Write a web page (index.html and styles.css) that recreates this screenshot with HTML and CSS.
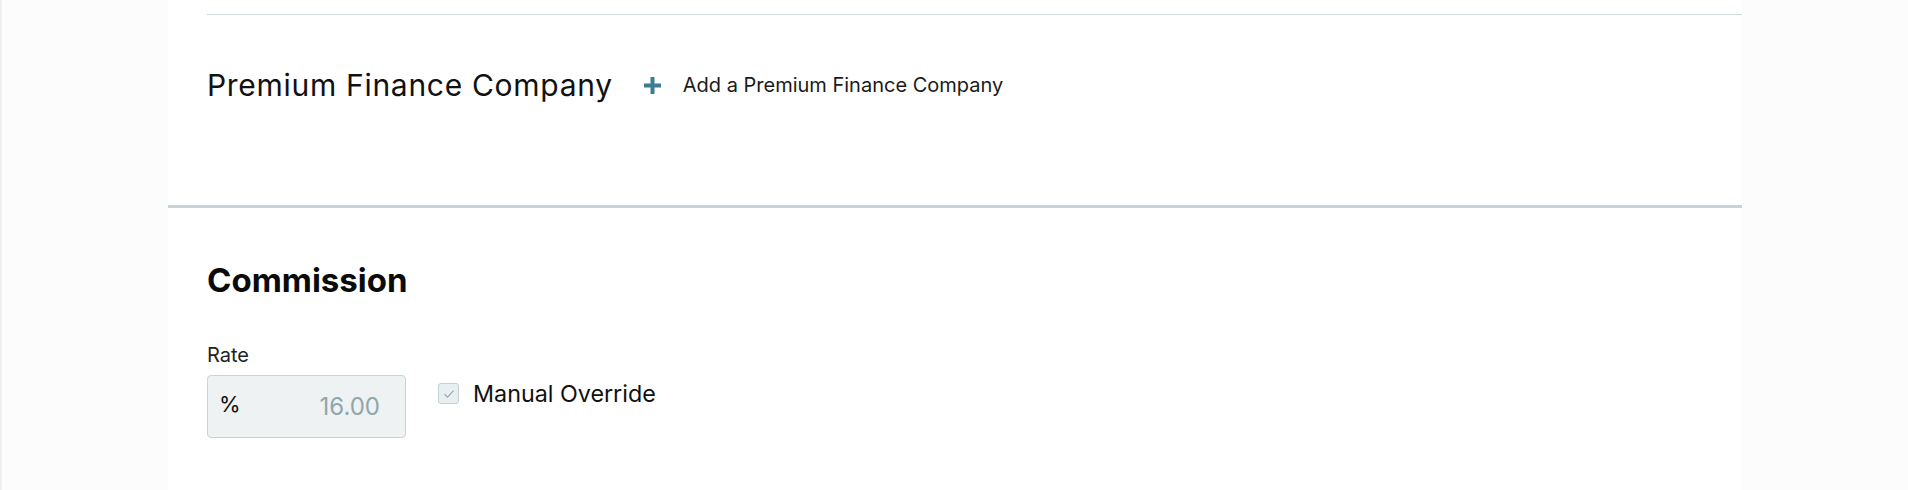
FILE: index.html
```html
<!DOCTYPE html>
<html>
<head>
<meta charset="utf-8">
<link rel="stylesheet" href="styles.css">
</head>
<body>
<div class="page">
  <main class="panel">
    <section class="pfc">
      <div class="pfc-row">
        <h2 class="pfc-title">Premium Finance Company</h2>
        <button class="add-btn" type="button">
          <svg class="plus" width="17" height="17" viewBox="0 0 17 17"><path d="M8.5 0v17M0 8.5h17" stroke="#3b7f8f" stroke-width="4"/></svg>
          <span>Add a Premium Finance Company</span>
        </button>
      </div>
    </section>
    <section class="commission">
      <h2 class="comm-title">Commission</h2>
      <div class="field-row">
        <div class="field">
          <label class="field-label">Rate</label>
          <div class="rate-input">
            <span class="unit">%</span>
            <span class="value">16.00</span>
          </div>
        </div>
        <label class="override">
          <span class="checkbox">
            <svg width="12" height="10" viewBox="0 0 12 10"><path d="M1.5 5.2l3 3 6-6.5" fill="none" stroke="#97a8ae" stroke-width="1.2"/></svg>
          </span>
          <span class="override-text">Manual Override</span>
        </label>
      </div>
    </section>
  </main>
</div>
</body>
</html>
```

FILE: styles.css
```css
html, body {
  margin: 0;
  padding: 0;
  background: #fcfcfc;
}
body {
  font-family: "Inter", "Lato", "Liberation Sans", sans-serif;
  color: #111;
}
.page {
  display: flex;
  min-height: 490px;
  border-left: 2px solid #eef1f2;
}
.panel {
  margin-left: 166px;
  width: 1574px;
  background: #ffffff;
  display: flex;
  flex-direction: column;
}
.pfc {
  margin-left: 39px;
  margin-top: 14px;
  border-top: 1px solid #d3dde0;
  height: 190px;
}
.pfc-row {
  display: flex;
  align-items: center;
  gap: 31px;
  padding-top: 52px;
}
.pfc-title {
  margin: 0;
  font-size: 30px;
  font-weight: 400;
  letter-spacing: 0.7px;
  color: #111;
}
.add-btn {
  display: flex;
  align-items: center;
  gap: 22px;
  border: 0;
  background: none;
  padding: 0;
  font-family: inherit;
  font-size: 20px;
  color: #1a1a1a;
  cursor: pointer;
}
.commission {
  border-top: 3px solid #c8d5d8;
  padding-left: 39px;
  padding-top: 52px;
}
.comm-title {
  margin: 0;
  font-size: 33px;
  font-weight: 700;
  color: #0a0a0a;
}
.field-row {
  display: flex;
  align-items: flex-start;
  gap: 32px;
  margin-top: 43px;
}
.field {
  display: flex;
  flex-direction: column;
  gap: 8px;
}
.field-label {
  font-size: 20px;
  color: #222;
}
.rate-input {
  box-sizing: border-box;
  width: 199px;
  height: 63px;
  border: 1px solid #c7d4d8;
  border-radius: 4px;
  background: #eef2f2;
  display: flex;
  align-items: center;
  justify-content: space-between;
  padding: 0 25px 0 11px;
  font-size: 24px;
}
.unit {
  color: #111;
  font-size: 22px;
  margin-top: -6px;
}
.value {
  color: #8fa6ad;
}
.override {
  display: flex;
  align-items: center;
  gap: 14px;
  margin-top: 36px;
}
.checkbox {
  box-sizing: border-box;
  width: 21px;
  height: 21px;
  border: 1px solid #c4d1d5;
  border-radius: 3px;
  background: #e9eff0;
  display: flex;
  align-items: center;
  justify-content: center;
}
.override-text {
  font-size: 23.3px;
  color: #111;
}
```
